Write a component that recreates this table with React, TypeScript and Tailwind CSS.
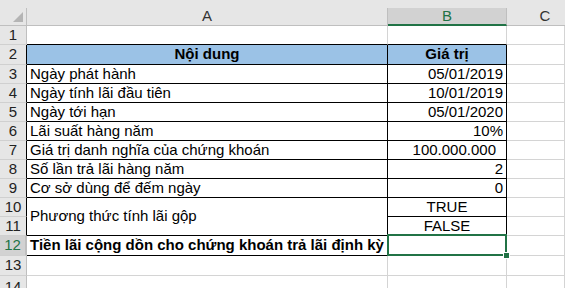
import React from 'react';

type Row = { n: number; a?: string; b?: string; pad?: string };

const rows: Row[] = [
    { n: 3, a: 'Ngày phát hành', b: '05/01/2019' },
    { n: 4, a: 'Ngày tính lãi đầu tiên', b: '10/01/2019' },
    { n: 5, a: 'Ngày tới hạn', b: '05/01/2020' },
    { n: 6, a: 'Lãi suất hàng năm', b: '10%' },
    { n: 7, a: 'Giá trị danh nghĩa của chứng khoán', b: '100.000.000', pad: 'pr-[10px]' },
    { n: 8, a: 'Số lần trả lãi hàng năm', b: '2' },
    { n: 9, a: 'Cơ sở dùng để đếm ngày', b: '0' },
];

const RowHead: React.FC<{ n: number; edge?: string; selected?: boolean }> = ({ n, edge = 'border-r-[#bfbfbf]', selected }) => (
    <div className={`flex items-center justify-center border-r border-b border-b-[#d0d0d0] ${edge} ${selected ? 'bg-[#d2d2d2] text-[#217346] border-r-2 border-r-[#217346]' : 'bg-[#e6e6e6] text-[#222]'}`}>
        {n}
    </div>
);

const GridCell: React.FC<{ className?: string; children?: React.ReactNode }> = ({ className = '', children }) => (
    <div className={`flex items-center border-r border-b whitespace-nowrap overflow-visible ${className}`}>{children}</div>
);

const App: React.FC = () => {
    return (
        <div className="w-[565px] h-[288px] overflow-hidden bg-white text-[15px] text-black" style={{ fontFamily: '"Liberation Sans", Arial, sans-serif' }}>
            <div className="h-[8px] bg-[#e6e6e6]" />
            <div className="grid grid-cols-[27px_361px_119px_1fr] grid-rows-[18px_19px_20px_repeat(9,19px)_20px_20px_1fr] h-[280px]">
                {/* column headers */}
                <div className="relative bg-[#e6e6e6] border-r border-b border-[#bfbfbf]">
                    <svg className="absolute right-[3px] bottom-[3px]" width="10" height="10" viewBox="0 0 10 10">
                        <polygon points="10,0 10,10 0,10" fill="#b4b4b4" />
                    </svg>
                </div>
                <div className="flex items-center justify-center bg-[#e6e6e6] border-r border-b border-[#bfbfbf] text-[#333]">A</div>
                <div className="flex items-center justify-center bg-[#d2d2d2] border-r border-r-[#bfbfbf] border-b-2 border-b-[#217346] text-[#217346]">B</div>
                <div className="flex items-center justify-center bg-[#e6e6e6] border-b border-[#bfbfbf] text-[#333] pl-[18px]">C</div>

                {/* row 1 */}
                <RowHead n={1} />
                <GridCell className="border-r-[#d4d4d4] border-b-black" />
                <GridCell className="border-r-[#d4d4d4] border-b-black" />
                <GridCell className="border-[#d4d4d4]" />

                {/* row 2 */}
                <RowHead n={2} edge="border-r-black" />
                <GridCell className="justify-center font-bold bg-[#9bc2e6] border-black">Nội dung</GridCell>
                <GridCell className="justify-center font-bold bg-[#9bc2e6] border-black">Giá trị</GridCell>
                <GridCell className="border-[#d4d4d4]" />

                {rows.map(r => (
                    <React.Fragment key={r.n}>
                        <RowHead n={r.n} edge="border-r-black" />
                        <GridCell className="pl-[3px] border-black">{r.a}</GridCell>
                        <GridCell className={`justify-end border-black ${r.pad ?? 'pr-[3px]'}`}>{r.b}</GridCell>
                        <GridCell className="border-[#d4d4d4]" />
                    </React.Fragment>
                ))}

                {/* rows 10-11 with merged A */}
                <RowHead n={10} edge="border-r-black" />
                <GridCell className="row-span-2 pl-[3px] border-black">Phương thức tính lãi gộp</GridCell>
                <GridCell className="justify-center border-black">TRUE</GridCell>
                <GridCell className="border-[#d4d4d4]" />
                <RowHead n={11} edge="border-r-black" />
                <GridCell className="justify-center border-black">FALSE</GridCell>
                <GridCell className="border-[#d4d4d4]" />

                {/* row 12 */}
                <RowHead n={12} selected />
                <GridCell className="pl-[3px] font-bold border-black">Tiền lãi cộng dồn cho chứng khoán trả lãi định kỳ</GridCell>
                <div className="relative border-r border-b border-black">
                    <div className="absolute -left-[1px] -top-[2px] -right-[1px] -bottom-[1px] border-2 border-[#217346]" />
                    <div className="absolute -right-[4px] -bottom-[4px] w-[7px] h-[7px] bg-[#217346] border border-white" />
                </div>
                <GridCell className="border-[#d4d4d4]" />

                {/* rows 13-14 */}
                {[13, 14].map(n => (
                    <React.Fragment key={n}>
                        <RowHead n={n} />
                        <GridCell className="border-[#d4d4d4]" />
                        <GridCell className="border-[#d4d4d4]" />
                        <GridCell className="border-[#d4d4d4]" />
                    </React.Fragment>
                ))}
            </div>
        </div>
    );
};

export default App;
